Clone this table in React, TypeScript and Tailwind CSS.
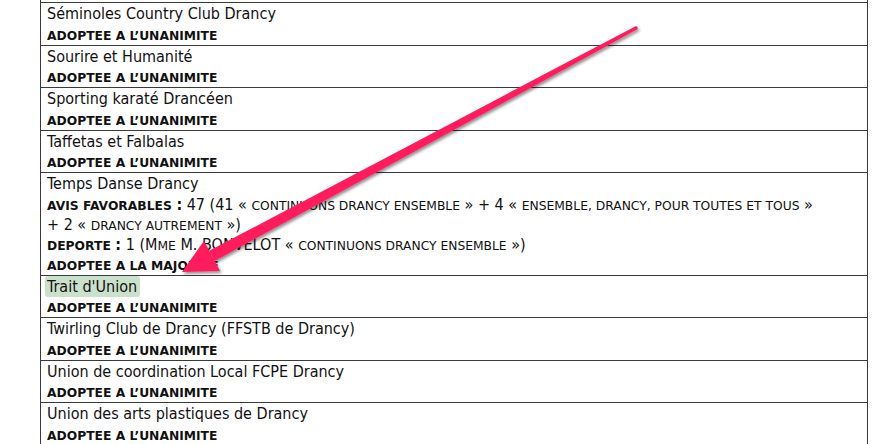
import React from "react";

const FONT = "font-['DejaVu_Sans_Condensed','DejaVu_Sans',sans-serif] [font-stretch:condensed]";

function Sc({ children, bold }: { children: React.ReactNode; bold?: boolean }) {
  return (
    <span
      className={`uppercase text-[12.3px] leading-none font-['DejaVu_Sans',sans-serif] [font-stretch:normal] ${
        bold ? "font-bold" : ""
      }`}
    >
      {children}
    </span>
  );
}

function Row({ name, status, highlight }: { name: string; status: string; highlight?: boolean }) {
  return (
    <div className="border-b border-[#3a3a3a] px-[6px]">
      <div className="leading-[21.5px] text-[16px]">
        {highlight ? (
          <span className="bg-[#cbe1cb] rounded-[3px] -ml-[2px] pl-[2px] pr-[3px] py-[1px]">{name}</span>
        ) : (
          name
        )}
      </div>
      <div className="leading-[20px] text-[16px]">
        <Sc bold>{status}</Sc>
      </div>
    </div>
  );
}

const before = [
  "Séminoles Country Club Drancy",
  "Sourire et Humanité",
  "Sporting karaté Drancéen",
  "Taffetas et Falbalas",
];
const after = [
  "Twirling Club de Drancy (FFSTB de Drancy)",
  "Union de coordination Local FCPE Drancy",
  "Union des arts plastiques de Drancy",
];

const UNA = "adoptee a l’unanimite";

function Arrow() {
  const S = [636, 28];
  const T = [182, 272];
  const dx = T[0] - S[0];
  const dy = T[1] - S[1];
  const len = Math.hypot(dx, dy);
  const d = [dx / len, dy / len];
  const n = [d[1], -d[0]];
  const L = 34;
  const W = 17;
  const B = [T[0] - L * d[0], T[1] - L * d[1]];
  const p = (a: number[], k: number) => `${(a[0] + k * n[0]).toFixed(1)},${(a[1] + k * n[1]).toFixed(1)}`;
  const shaft = [p(S, 1.8), p(B, 5.8), p(B, -5.8), p(S, -1.8)].join(" ");
  const head = [`${T[0]},${T[1]}`, p(B, W), p(B, -W)].join(" ");
  return (
    <svg className="absolute left-0 top-0 pointer-events-none" width="895" height="444" viewBox="0 0 895 444">
      <defs>
        <filter id="sh" x="-20%" y="-20%" width="140%" height="140%">
          <feDropShadow dx="1.5" dy="2" stdDeviation="1.4" floodColor="#000" floodOpacity="0.45" />
        </filter>
      </defs>
      <g filter="url(#sh)" fill="#ff1c5d">
        <polygon points={shaft} />
        <polygon points={head} />
        <circle cx={S[0]} cy={S[1]} r={1.8} />
      </g>
    </svg>
  );
}

export default function App() {
  return (
    <div className={`relative w-[895px] h-[444px] overflow-hidden bg-white text-[#111] ${FONT}`}>
      <div className="ml-[40px] w-[828px] border-x border-[#3a3a3a]">
        <div className="h-[2px] border-b border-[#3a3a3a] box-content"></div>
        {before.map((n) => (
          <Row key={n} name={n} status={UNA} />
        ))}
        <div className="border-b border-[#3a3a3a] px-[6px] text-[16px] leading-[20.1px]">
          <div className="leading-[21.5px]">Temps Danse Drancy</div>
          <div>
            <Sc bold>avis favorables</Sc> <b>:</b> 47 (41 « <Sc>continuons drancy ensemble</Sc> » + 4 «{" "}
            <Sc>ensemble, drancy, pour toutes et tous</Sc> »
            <br />+ 2 « <Sc>drancy autrement</Sc> »)
          </div>
          <div>
            <Sc bold>deporte</Sc> <b>:</b> 1 (M<Sc>me</Sc> M. BONVELOT « <Sc>continuons drancy ensemble</Sc> »)
          </div>
          <div>
            <Sc bold>adoptee a la majorite</Sc>
          </div>
        </div>
        <Row name="Trait d'Union" status={UNA} highlight />
        {after.map((n) => (
          <Row key={n} name={n} status={UNA} />
        ))}
      </div>
      <Arrow />
    </div>
  );
}
